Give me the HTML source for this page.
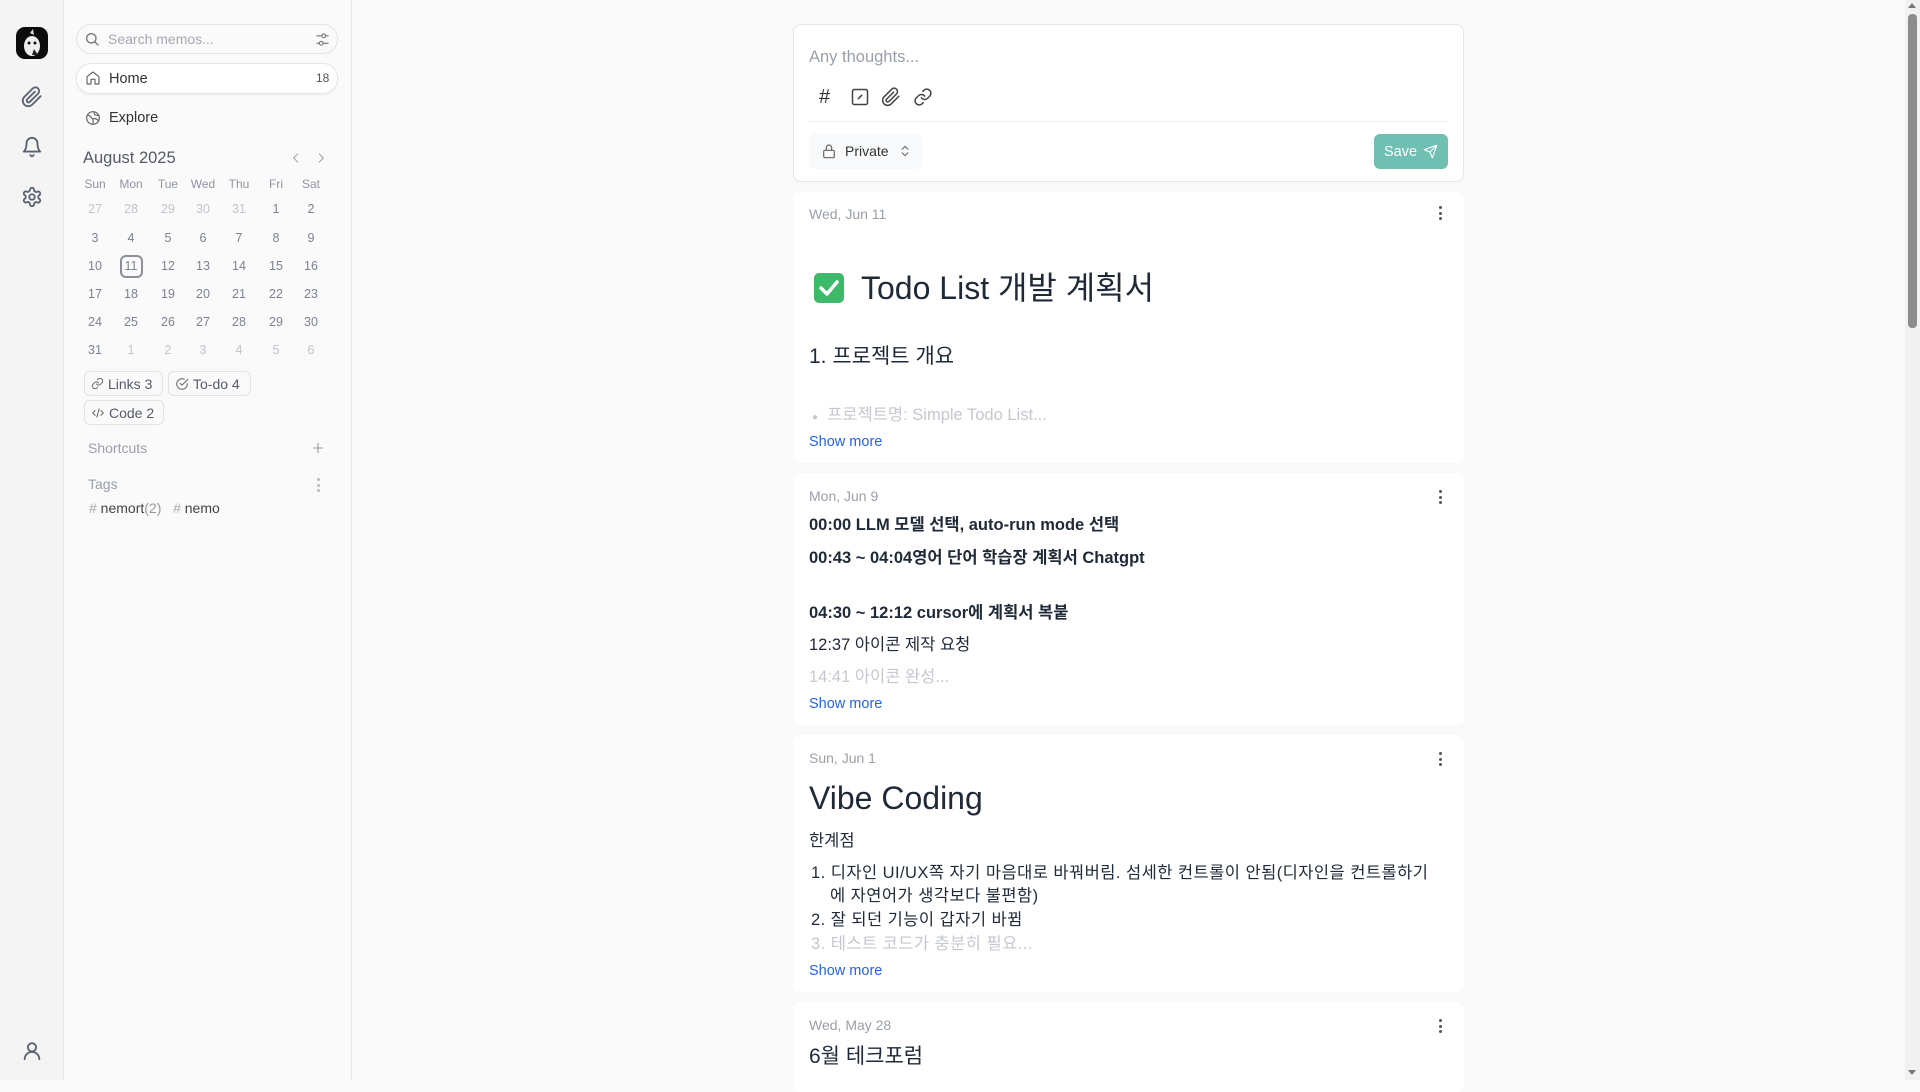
<!DOCTYPE html>
<html><head><meta charset="utf-8">
<style>
*{box-sizing:border-box;margin:0;padding:0}
body{width:1920px;height:1080px;overflow:hidden;background:#f9f9f9;font-family:"Liberation Sans","Noto Sans CJK KR",sans-serif;color:#1f2937;position:relative}
.abs{position:absolute}
.rail{left:0;top:0;width:64px;height:1080px;background:#f4f4f4;border-right:1px solid #e6e6e6}
.side{left:64px;top:0;width:288px;height:1080px;background:#fafafa;border-right:1px solid #e8e8e8}
svg.i{fill:none;stroke:#5b6270;stroke-width:2;stroke-linecap:round;stroke-linejoin:round}
.t{white-space:nowrap;line-height:24px}
.cal{font-size:12.5px;color:#7b8290;width:30px;text-align:center;line-height:20px}
.cal.m{color:#c0c4cc}
.chip{border:1px solid #e2e2e2;border-radius:6px;height:25px;font-size:14px;color:#555c68;display:flex;align-items:center;padding:0 6px;gap:4px;background:#fafafa}
.card{left:793px;width:671px;background:#fff;border-radius:8px}
.date{font-size:14px;color:#9aa0aa}
.dots{width:4px}
.dots i{display:block;width:3px;height:3px;border-radius:50%;background:#555;margin:0 0 2.5px 0}
.body{font-size:16.5px;color:#1f2937}
.show{font-size:14.5px;color:#2563eb}
b{font-weight:700}
</style></head><body>
<div class="abs rail"></div>
<div class="abs side"></div>
<div class="abs" style="left:16px;top:27px;width:32px;height:32px;border-radius:9px;background:#0c0c0c;overflow:hidden">
<svg width="32" height="32" viewBox="0 0 32 32"><ellipse cx="16" cy="19" rx="8" ry="10" fill="#eee"/><circle cx="13" cy="16" r="1.5" fill="#111"/><circle cx="19" cy="16" r="1.5" fill="#111"/><path d="M14 6 L17 2 L18 8" fill="#ddd"/><path d="M18 22 l4 6 l-6 0z" fill="#222"/></svg></div>
<svg class="abs i" style="left:21px;top:86px" width="22" height="22" viewBox="0 0 24 24"><path d="M21.4 11.1l-9.2 9.2a6 6 0 0 1-8.5-8.5l9.2-9.2a4 4 0 0 1 5.7 5.7l-9.2 9.2a2 2 0 0 1-2.8-2.8l8.5-8.5"/></svg>
<svg class="abs i" style="left:21px;top:136px" width="22" height="22" viewBox="0 0 24 24"><path d="M6 8a6 6 0 0 1 12 0c0 7 3 9 3 9H3s3-2 3-9"/><path d="M10.3 21a1.9 1.9 0 0 0 3.4 0"/></svg>
<svg class="abs i" style="left:21px;top:186px" width="22" height="22" viewBox="0 0 24 24"><circle cx="12" cy="12" r="3"/><path d="M12.2 2h-.4a2 2 0 0 0-2 2v.2a2 2 0 0 1-1 1.7l-.4.3a2 2 0 0 1-2 0l-.2-.1a2 2 0 0 0-2.7.7l-.2.4a2 2 0 0 0 .7 2.7l.2.1a2 2 0 0 1 1 1.7v.5a2 2 0 0 1-1 1.7l-.2.1a2 2 0 0 0-.7 2.7l.2.4a2 2 0 0 0 2.7.7l.2-.1a2 2 0 0 1 2 0l.4.3a2 2 0 0 1 1 1.7V20a2 2 0 0 0 2 2h.4a2 2 0 0 0 2-2v-.2a2 2 0 0 1 1-1.7l.4-.3a2 2 0 0 1 2 0l.2.1a2 2 0 0 0 2.7-.7l.2-.4a2 2 0 0 0-.7-2.7l-.2-.1a2 2 0 0 1-1-1.7v-.5a2 2 0 0 1 1-1.7l.2-.1a2 2 0 0 0 .7-2.7l-.2-.4a2 2 0 0 0-2.7-.7l-.2.1a2 2 0 0 1-2 0l-.4-.3a2 2 0 0 1-1-1.7V4a2 2 0 0 0-2-2z"/></svg>
<svg class="abs i" style="left:21px;top:1040px" width="22" height="22" viewBox="0 0 24 24"><circle cx="12" cy="8" r="4.5"/><path d="M4 21a8 8 0 0 1 16 0"/></svg>

<div class="abs" style="left:76px;top:24px;width:262px;height:30px;border:1px solid #e3e3e3;border-radius:15px;background:#fafafa"></div>
<svg class="abs i" style="left:84px;top:31px;stroke:#777" width="16" height="16" viewBox="0 0 24 24"><circle cx="11" cy="11" r="7"/><path d="M21 21l-5-5"/></svg>
<div class="abs t" style="left:108px;top:27px;font-size:14px;color:#a3a8b0">Search memos...</div>
<svg class="abs i" style="left:315px;top:32px;stroke:#777;stroke-width:1.8" width="15" height="15" viewBox="0 0 24 24"><path d="M3 6h8M17 6h4M3 18h4M13 18h8"/><circle cx="14" cy="6" r="3"/><circle cx="10" cy="18" r="3"/></svg>
<div class="abs" style="left:76px;top:63px;width:262px;height:31px;border:1px solid #e6e6e6;border-radius:15px;background:#fff;box-shadow:0 1px 2px rgba(0,0,0,.06)"></div>
<svg class="abs i" style="left:85px;top:70px;stroke:#666;stroke-width:1.8" width="16" height="16" viewBox="0 0 24 24"><path d="M3 10l9-7 9 7v10a1 1 0 0 1-1 1h-5v-7H9v7H4a1 1 0 0 1-1-1z"/></svg>
<div class="abs t" style="left:109px;top:67px;font-size:14.5px;color:#333">Home</div>
<div class="abs t" style="left:316px;top:66px;font-size:12px;color:#555">18</div>
<svg class="abs i" style="left:85px;top:110px;stroke:#666;stroke-width:1.8" width="16" height="16" viewBox="0 0 24 24"><circle cx="12" cy="12" r="9.5"/><path d="M4 8c4 0 5 3 7 5s1 6 1 8M14 3c-1 3 1 5 4 5h3M13 13c3-1 5 1 7 3"/></svg>
<div class="abs t" style="left:109px;top:106px;font-size:14.5px;color:#333">Explore</div>
<div class="abs t" style="left:83px;top:146px;font-size:16.5px;color:#555c68">August 2025</div>
<svg class="abs i" style="left:289px;top:151px;stroke:#999;stroke-width:1.6" width="14" height="14" viewBox="0 0 24 24"><path d="M15 5l-7 7 7 7"/></svg>
<svg class="abs i" style="left:314px;top:151px;stroke:#999;stroke-width:1.6" width="14" height="14" viewBox="0 0 24 24"><path d="M9 5l7 7-7 7"/></svg>
<div class="abs" style="left:120px;top:255px;width:23px;height:23px;border:2px solid #8a8f98;border-radius:6px"></div>
<div id="cal"></div>
<script>
(function(){var xs=[95,131,168,203,239,276,311],ys=[184,209,238,266,294,322,350];
var h=["Sun","Mon","Tue","Wed","Thu","Fri","Sat"];var o="";
h.forEach(function(d,i){o+='<div class="abs cal" style="left:'+(xs[i]-15)+'px;top:'+(ys[0]-10)+'px;color:#8f95a0;font-size:12px">'+d+'</div>'});
var days=[27,28,29,30,31,1,2];for(var n=3;n<=31;n++)days.push(n);days=days.concat([1,2,3,4,5,6]);
days.forEach(function(d,k){var r=Math.floor(k/7),c=k%7;var m=(r==0&&d>20)||(r==5&&d<10);
o+='<div class="abs cal'+(m?' m':'')+'" style="left:'+(xs[c]-15)+'px;top:'+(ys[r+1]-10)+'px">'+d+'</div>'});
document.getElementById('cal').innerHTML=o;})();
</script>
<div class="abs chip" style="left:84px;top:371px;width:79px">
<svg class="i" style="stroke:#666;stroke-width:1.8" width="13" height="13" viewBox="0 0 24 24"><path d="M10 13a5 5 0 0 0 7.5.5l3-3a5 5 0 0 0-7-7l-1.7 1.7M14 11a5 5 0 0 0-7.5-.5l-3 3a5 5 0 0 0 7 7l1.7-1.7"/></svg>Links 3</div>
<div class="abs chip" style="left:168px;top:371px;width:83px">
<svg class="i" style="stroke:#666;stroke-width:1.8" width="14" height="14" viewBox="0 0 24 24"><path d="M21 11.5V12a9 9 0 1 1-5.3-8.2"/><path d="M9 11l3 3L22 4"/></svg>To-do 4</div>
<div class="abs chip" style="left:84px;top:400px;width:80px">
<svg class="i" style="stroke:#666;stroke-width:1.8" width="14" height="14" viewBox="0 0 24 24"><path d="M7 8l-4 4 4 4M17 8l4 4-4 4M14 5l-4 14"/></svg>Code 2</div>
<div class="abs t" style="left:88px;top:436px;font-size:14px;color:#9aa0aa">Shortcuts</div>
<svg class="abs i" style="left:311px;top:441px;stroke:#999;stroke-width:1.8" width="14" height="14" viewBox="0 0 24 24"><path d="M12 4v16M4 12h16"/></svg>
<div class="abs t" style="left:88px;top:472px;font-size:14px;color:#9aa0aa">Tags</div>
<div class="abs dots" style="left:317px;top:478px"><i style="background:#bbb"></i><i style="background:#bbb"></i><i style="background:#bbb"></i></div>
<div class="abs t" style="left:89px;top:496px;font-size:14px;color:#444"><span style="color:#aaa">#</span> nemort<span style="color:#999">(2)</span>&nbsp;&nbsp;&nbsp;<span style="color:#aaa">#</span> nemo</div>

<div class="abs card" style="top:24px;height:158px;border:1px solid #e6e6e6"></div>
<div class="abs t" style="left:809px;top:45px;font-size:16.5px;color:#9aa0aa">Any thoughts...</div>
<div class="abs t" style="left:819px;top:85px;font-size:20px;color:#333">#</div>
<svg class="abs i" style="left:850px;top:87px;stroke:#444;stroke-width:1.8" width="20" height="20" viewBox="0 0 24 24"><rect x="3" y="3" width="18" height="18" rx="2"/><path d="M10 14l4-4"/></svg>
<svg class="abs i" style="left:881px;top:87px;stroke:#444;stroke-width:1.8" width="20" height="20" viewBox="0 0 24 24"><path d="M21.4 11.1l-9.2 9.2a6 6 0 0 1-8.5-8.5l9.2-9.2a4 4 0 0 1 5.7 5.7l-9.2 9.2a2 2 0 0 1-2.8-2.8l8.5-8.5"/></svg>
<svg class="abs i" style="left:913px;top:87px;stroke:#444;stroke-width:1.8" width="20" height="20" viewBox="0 0 24 24"><path d="M10 13a5 5 0 0 0 7.5.5l3-3a5 5 0 0 0-7-7l-1.7 1.7M14 11a5 5 0 0 0-7.5-.5l-3 3a5 5 0 0 0 7 7l1.7-1.7"/></svg>
<div class="abs" style="left:809px;top:121px;width:639px;height:1px;background:#eeeeee"></div>
<div class="abs" style="left:809px;top:134px;width:113px;height:35px;background:#f8f9fa;border-radius:6px"></div>
<svg class="abs i" style="left:821px;top:143px;stroke:#666;stroke-width:1.8" width="16" height="16" viewBox="0 0 24 24"><rect x="4" y="11" width="16" height="11" rx="2"/><path d="M8 11V7a4 4 0 0 1 8 0v4"/></svg>
<div class="abs t" style="left:845px;top:139px;font-size:14px;color:#333">Private</div>
<svg class="abs i" style="left:898px;top:143px;stroke:#666;stroke-width:1.8" width="14" height="16" viewBox="0 0 24 24"><path d="M7 9l5-5 5 5M7 15l5 5 5-5"/></svg>
<div class="abs" style="left:1374px;top:134px;width:74px;height:35px;background:#6fbfb3;border-radius:6px;color:#fff;font-size:14.5px;display:flex;align-items:center;justify-content:center;gap:6px">Save <svg class="i" style="stroke:#fff;stroke-width:1.8" width="15" height="15" viewBox="0 0 24 24"><path d="M22 2L11 13M22 2l-7 20-4-9-9-4z"/></svg></div>

<div class="abs card" style="top:192px;height:271px"></div>
<div class="abs t date" style="left:809px;top:202px">Wed, Jun 11</div>
<div class="abs dots" style="left:1439px;top:206px"><i></i><i></i><i></i></div>
<div class="abs" style="left:814px;top:273px;width:30px;height:30px;border-radius:5px;background:#3cba6a"><svg width="30" height="30" viewBox="0 0 30 30"><path d="M7 15l6 6 10-12" fill="none" stroke="#fff" stroke-width="3.5" stroke-linecap="round" stroke-linejoin="round"/></svg></div>
<div class="abs t" style="left:861px;top:268px;font-size:32px;line-height:40px;color:#1f2937">Todo List 개발 계획서</div>
<div class="abs t" style="left:809px;top:343px;font-size:21px;line-height:28px">1. 프로젝트 개요</div>
<div class="abs t body" style="left:812px;top:403px;color:#c4c8ce"><span style="font-size:10px">●</span>&nbsp; 프로젝트명: Simple Todo List...</div>
<div class="abs t show" style="left:809px;top:430px">Show more</div>

<div class="abs card" style="top:473px;height:252px"></div>
<div class="abs t date" style="left:809px;top:484px">Mon, Jun 9</div>
<div class="abs dots" style="left:1439px;top:490px"><i></i><i></i><i></i></div>
<div class="abs t body" style="left:809px;top:513px"><b>00:00 LLM 모델 선택, auto-run mode 선택</b></div>
<div class="abs t body" style="left:809px;top:546px"><b>00:43 ~ 04:04영어 단어 학습장 계획서 Chatgpt</b></div>
<div class="abs t body" style="left:809px;top:601px"><b>04:30 ~ 12:12 cursor에 계획서 복붙</b></div>
<div class="abs t body" style="left:809px;top:633px">12:37 아이콘 제작 요청</div>
<div class="abs t body" style="left:809px;top:665px;color:#c4c8ce">14:41 아이콘 완성...</div>
<div class="abs t show" style="left:809px;top:692px">Show more</div>

<div class="abs card" style="top:735px;height:257px"></div>
<div class="abs t date" style="left:809px;top:746px">Sun, Jun 1</div>
<div class="abs dots" style="left:1439px;top:752px"><i></i><i></i><i></i></div>
<div class="abs t" style="left:809px;top:778px;font-size:32px;line-height:40px">Vibe Coding</div>
<div class="abs t body" style="left:809px;top:829px">한계점</div>
<div class="abs t body" style="left:811px;top:861px;letter-spacing:0.45px">1. 디자인 UI/UX쪽 자기 마음대로 바꿔버림. 섬세한 컨트롤이 안됨(디자인을 컨트롤하기</div>
<div class="abs t body" style="left:830px;top:884px;letter-spacing:0.45px">에 자연어가 생각보다 불편함)</div>
<div class="abs t body" style="left:811px;top:908px;letter-spacing:0.45px">2. 잘 되던 기능이 갑자기 바뀜</div>
<div class="abs t body" style="left:811px;top:932px;color:#c4c8ce;letter-spacing:0.45px">3. 테스트 코드가 충분히 필요...</div>
<div class="abs t show" style="left:809px;top:959px">Show more</div>

<div class="abs card" style="top:1002px;height:90px"></div>
<div class="abs t date" style="left:809px;top:1013px">Wed, May 28</div>
<div class="abs dots" style="left:1439px;top:1019px"><i></i><i></i><i></i></div>
<div class="abs t" style="left:809px;top:1042px;font-size:21px;line-height:30px">6월 테크포럼</div>

<div class="abs" style="left:1905px;top:0;width:15px;height:1080px;background:#f1f1f1"></div>
<div class="abs" style="left:1908px;top:14px;width:9px;height:314px;background:#8c8c8c;border-radius:4px"></div>
<div class="abs" style="left:1908px;top:3px;width:0;height:0;border-left:4px solid transparent;border-right:4px solid transparent;border-bottom:5px solid #777"></div>
<div class="abs" style="left:1908px;top:1070px;width:0;height:0;border-left:4px solid transparent;border-right:4px solid transparent;border-top:5px solid #777"></div>
</body></html>
